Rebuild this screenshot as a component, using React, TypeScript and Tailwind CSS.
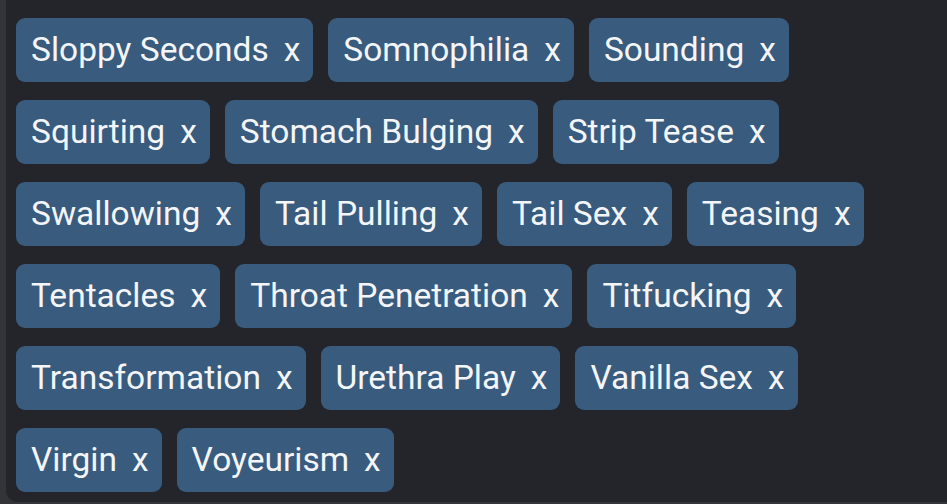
import React from "react";

const rows = [
  ["Sloppy Seconds", "Somnophilia", "Sounding"],
  ["Squirting", "Stomach Bulging", "Strip Tease"],
  ["Swallowing", "Tail Pulling", "Tail Sex", "Teasing"],
  ["Tentacles", "Throat Penetration", "Titfucking"],
  ["Transformation", "Urethra Play", "Vanilla Sex"],
  ["Virgin", "Voyeurism"],
];

export default function App() {
  return (
    <div
      className="w-[947px] h-[504px] overflow-hidden bg-[#333437] flex pl-[6px] pb-[2px]"
      style={{ fontFamily: "Roboto, 'Noto Sans', sans-serif" }}
    >
      <div className="flex-1 bg-[#24252a] rounded-bl-[12px] overflow-hidden flex flex-col justify-end">
        <div className="flex flex-col gap-y-[18px] px-[10px] pb-[10px]">
          <div className="flex gap-x-[19px]">
            <div className="h-[64px] w-[327px] rounded-[9px] bg-[#395b7d]" />
            <div className="h-[64px] w-[231px] rounded-[9px] bg-[#395b7d]" />
          </div>
          {rows.map((row, i) => (
            <div key={i} className="flex gap-x-[15px]">
              {row.map((t) => (
                <div
                  key={t}
                  className="h-[64px] flex items-center rounded-[9px] bg-[#395b7d] pl-[15px] pr-[13px] text-[33.5px] text-[#f3f5f8] leading-none whitespace-nowrap"
                >
                  <span>{t}</span>
                  <span className="ml-[15px]">x</span>
                </div>
              ))}
            </div>
          ))}
        </div>
      </div>
    </div>
  );
}
